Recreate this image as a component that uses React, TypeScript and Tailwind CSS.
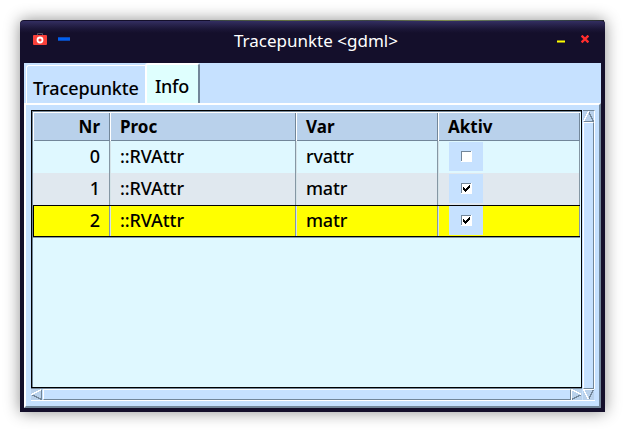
import React from "react";

const rows = [
  { nr: 0, proc: "::RVAttr", name: "rvattr", active: false },
  { nr: 1, proc: "::RVAttr", name: "matr", active: true },
  { nr: 2, proc: "::RVAttr", name: "matr", active: true },
];

const columns = "grid grid-cols-[77px_186px_142px_142px]";

function CameraIcon() {
  return (
    <svg width="14" height="12" viewBox="0 0 14 12">
      <path d="M4.5 2V.5h5V2" fill="none" stroke="#555264" />
      <rect y="2" width="14" height="10" rx="1" fill="#f8403a" />
      <circle cx="7" cy="7" r="2.5" fill="none" stroke="#fff" strokeWidth="1.8" />
    </svg>
  );
}

function TitleBar() {
  return (
    <header className="flex h-[42px] shrink-0 rounded-t-[4px] bg-[linear-gradient(#332e62_0px,#2a2550_3px,#1b1637_8px,#140f2b_12px)] pl-[13px] pr-[16px]">
      <div className="flex w-[201px] pt-[12px]">
        <CameraIcon />
        <div className="ml-[11px] mt-[4px] h-[4px] w-[12px] border-y border-[#0a48b4] bg-[#005ff0]" />
      </div>
      <div className="w-[180px] whitespace-pre text-[17px] leading-[39px] text-white">Tracepunkte &lt;gdml&gt;</div>
      <div className="ml-auto flex">
        <div className="mr-[16px] mt-[19px] h-[3px] w-[8px] border-y border-[#8d8a12] bg-[#ffff00]" />
        <svg className="mt-[14px]" width="8" height="8" viewBox="0 0 8 8">
          <path d="M.6 .6l6.8 6.8M7.4 .6l-6.8 6.8" stroke="#ff2d2d" strokeWidth="2.3" />
        </svg>
      </div>
    </header>
  );
}

function Check({ checked }: { checked: boolean }) {
  return (
    <svg width="11" height="11" viewBox="0 0 11 11" shapeRendering="crispEdges">
      <path d="M0 0h11v11H0z" fill="#fff" />
      <path d="M0 0h10v1H1v9H0z" fill="#728699" />
      {checked && (
        <path d="M8 2h1v3H8v1H7v1H6v1H5v1H4V8H3V7H2V4h1v1h1v1h1V5h1V4h1V3h1z" fill="#000" />
      )}
    </svg>
  );
}

function Arrow({ dir }: { dir: "up" | "down" | "left" | "right" }) {
  const shapes = {
    up: { light: "M.5 10.5L5.5 .5", dark: "M5.5 .5l5 10H.5" },
    down: { light: "M10.5 .5H.5l5 10", dark: "M10.5 .5l-5 10" },
    left: { light: "M.5 5.5l10-5", dark: "M10.5 .5v10l-10-5" },
    right: { light: "M.5 10.5V.5l10 5", dark: "M10.5 5.5l-10 5" },
  };
  return (
    <svg className="shrink-0 bg-[#b9d1eb]" width="11" height="11" viewBox="0 0 11 11" shapeRendering="crispEdges">
      <path d={shapes[dir].dark} fill="none" stroke="#728699" />
      <path d={shapes[dir].light} fill="none" stroke="#fff" />
    </svg>
  );
}

function Table() {
  return (
    <div className="h-[279px] border-b border-[#728699]">
      <div className="h-[278px] w-[551px] border border-black bg-[#dff8ff]">
        <div className="h-[276px] w-[549px] border-l border-t border-[#728699] pr-px">
          <div className={`${columns} h-[29px] border-b border-t border-b-[#728699] border-t-white bg-[#b9d1eb] text-[17px] font-bold leading-[28px] tracking-normal`}>
            <div className="border-l border-r border-l-white border-r-[#728699] pr-[9px] text-right">Nr</div>
            <div className="border-l border-r border-l-white border-r-[#728699] pl-[9px]">Proc</div>
            <div className="border-l border-r border-l-white border-r-[#728699] pl-[9px]">Var</div>
            <div className="border-l border-r border-l-white border-r-[#728699] pl-[9px]">Aktiv</div>
          </div>
          {rows.map((r, i) => (
            <div
              key={r.nr}
              className={`${columns} h-[32px] ${i === 2 ? "border-y border-black bg-[#ffff00] leading-[28px]" : i === 1 ? "bg-[#e0e8ef] leading-[30px]" : "bg-[#dff8ff] leading-[30px]"}`}
            >
              <div className={`border-l border-r border-r-[#8597a4] pr-[9px] text-right ${i === 2 ? "border-l-black" : "border-l-transparent"}`}>{r.nr}</div>
              <div className="border-l border-r border-l-[#d5e3e8] border-r-[#8597a4] pl-[9px]">{r.proc}</div>
              <div className="border-l border-r border-l-[#d5e3e8] border-r-[#8597a4] pl-[9px] tracking-[-0.2px]">{r.name}</div>
              <div className="border-l border-r border-l-[#d5e3e8] border-r-[#8597a4] pl-[10px]">
                <div className={`flex h-[29px] w-[34px] items-center justify-center bg-[#c6e1ff] ${i === 2 ? "" : "mt-px"}`}>
                  <Check checked={r.active} />
                </div>
              </div>
            </div>
          ))}
          <div className="h-px bg-[#8597a4]" />
        </div>
      </div>
    </div>
  );
}

export default function App() {
  return (
    <div className="h-[432px] w-[625px] overflow-hidden bg-white pl-[20px] pt-[20px] font-['Noto_Sans',sans-serif]">
      <div className="flex h-[392px] w-[585px] flex-col rounded-t-[4px] bg-[#140f2b] shadow-[0_0_16px_rgba(0,0,0,0.45)]">
        <div className="ml-[190px] mr-px h-px shrink-0 bg-[linear-gradient(90deg,#344044,#62703e,#3c4545,#7c8a4c,#40555e,#272b2d)]" />
        <TitleBar />
        <main className="mx-[4px] flex h-[345px] flex-col bg-[#c6e1ff] text-[18px] font-medium tracking-[-0.1px] text-black">
          <nav className="flex h-[40px] shrink-0 pl-[2px]">
            <div className="mt-[2px] h-[38px] w-[119px] rounded-tl-[3px] border-l border-t border-white pl-[6px] pt-[7px] leading-[31px]">Tracepunkte</div>
            <div className="h-[41px] w-[55px] rounded-t-[3px] border-l-2 border-r-2 border-t-2 border-l-white border-r-[#728699] border-t-white bg-[#dffffe] pl-[8px] pt-[5px] leading-[32px] tracking-[-0.3px]">Info</div>
          </nav>
          <section className="h-[305px] border-2 border-b-[#728699] border-l-white border-r-[#728699] border-t-white pl-[5px] pt-[5px]">
            <div className="flex">
              <Table />
              <div className="ml-px flex h-[279px] w-[12px] flex-col border-r border-t border-r-white border-t-[#728699] bg-[#b9d1eb]">
                <Arrow dir="up" />
                <div className="w-[11px] flex-1 border border-b-[#728699] border-l-white border-r-[#728699] border-t-white bg-[#c6e1ff]" />
              </div>
            </div>
            <div className="flex h-[12px] w-[564px] border-b border-b-white">
              <Arrow dir="left" />
              <div className="ml-px h-[11px] w-[528px] border border-b-[#728699] border-l-white border-r-[#728699] border-t-white bg-[#c6e1ff]" />
              <Arrow dir="right" />
              <div className="ml-px">
                <Arrow dir="down" />
              </div>
            </div>
          </section>
        </main>
      </div>
    </div>
  );
}
